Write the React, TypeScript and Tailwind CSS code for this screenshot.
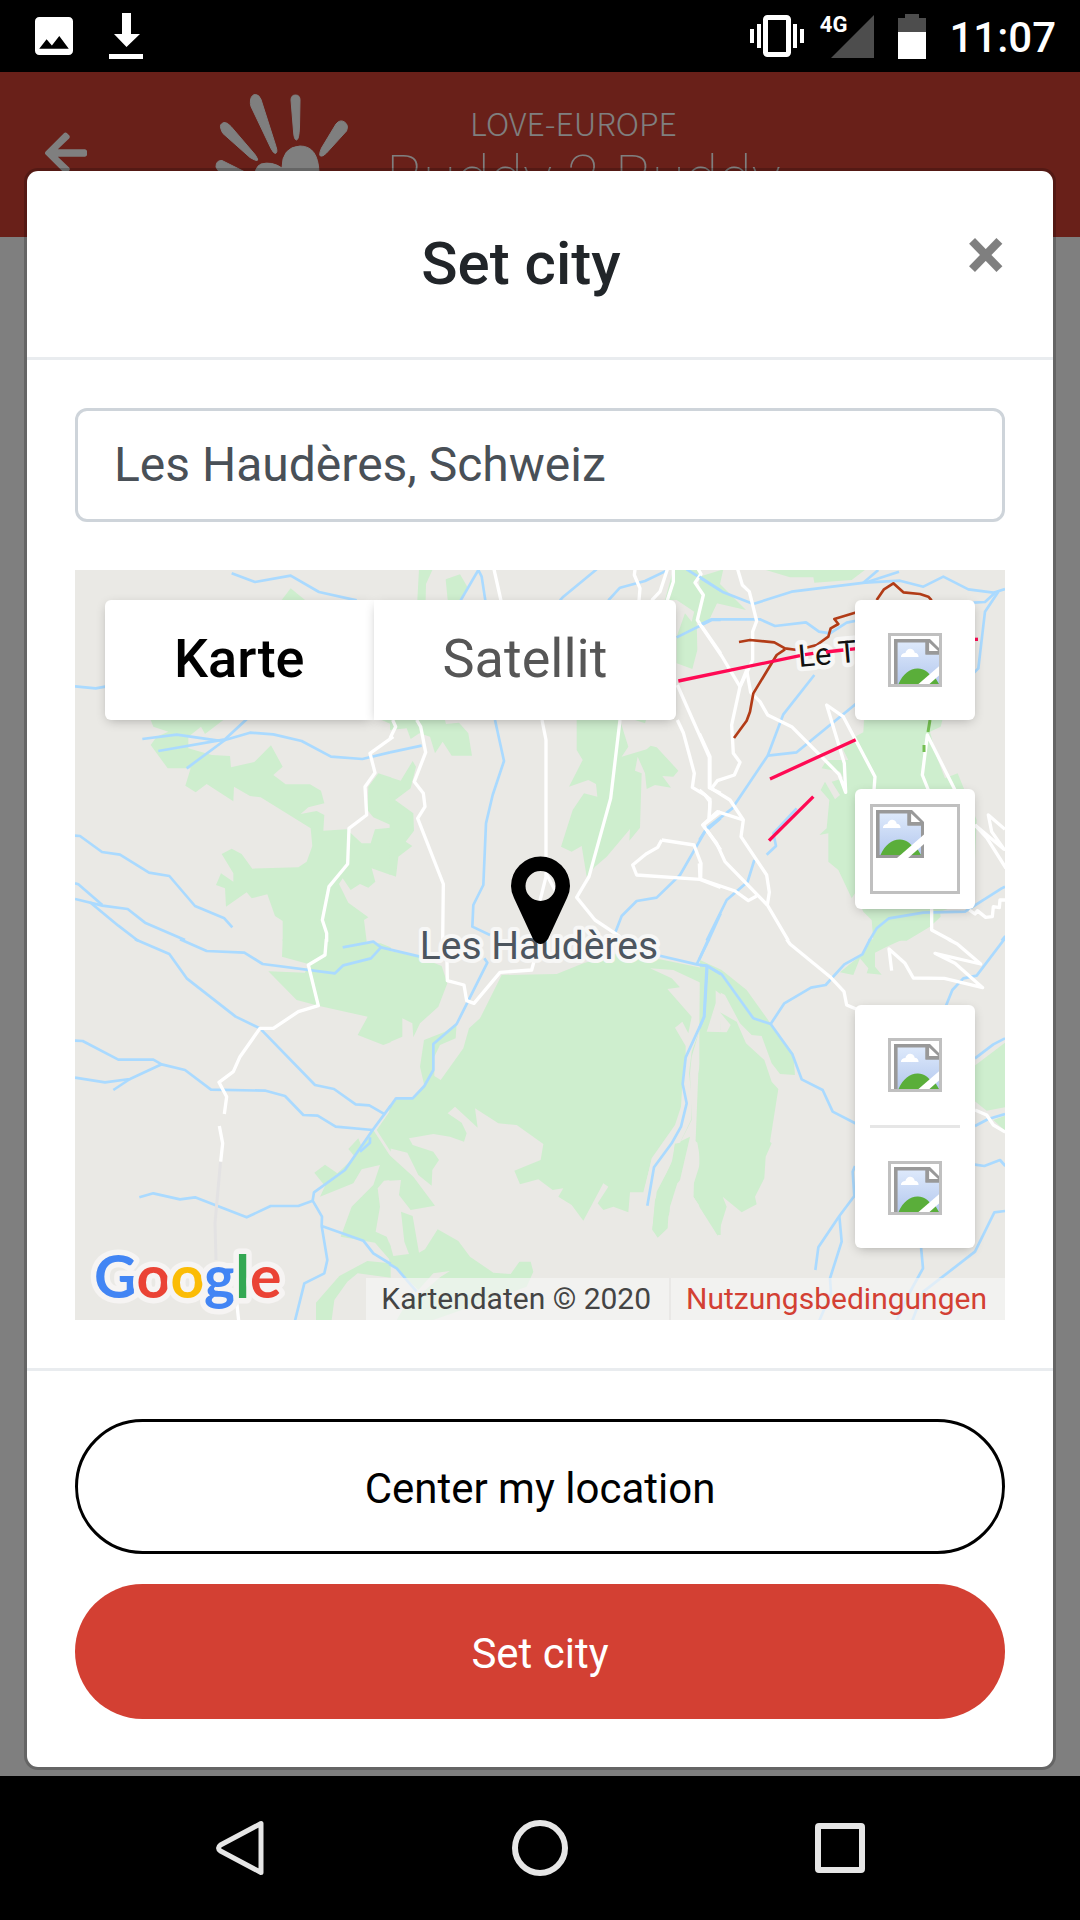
import { FaArrowLeft } from "react-icons/fa";

const WATER = "#aadaff";
const WOOD = "#ceeece";
const ROAD = "#ffffff";
const LIFT = "#ff0a54";
const RAIL = "#b23c17";

type Tile = {
  at: string;
  woods?: string[];
  clearings?: string[];
  rivers?: string[];
  roads?: string[];
  rails?: string[];
  lifts?: string[];
};

/* The map is divided into six tiles, each drawn at three units per pixel. */
const TILES: Tile[] = [
  {
    at: "translate(60 560) scale(0.33333)",
    woods: [
      "665,120 692,85 735,120",
      "272,480 490,480 435,522 423,500 385,530 385,565 455,585 510,588 513,622 583,606 633,556 668,620 640,645 677,673 750,673 783,692 793,730 745,742 722,762 770,753 793,765 790,812 860,808 905,850 932,850 945,808 992,803 992,945 935,925 946,965 925,983 900,972 872,990 848,955 837,972 865,1028 925,1072 912,1080 920,1143 668,1143 668,1083 645,1068 622,1003 575,1015 560,997 498,1040 495,985 468,975 483,940 520,965 520,940 485,882 515,866 545,882 577,926 715,922 740,905 757,858 752,805 602,712 570,708 522,680 520,724 440,672 407,697 376,677 392,625 323,625 272,555 290,530 325,515 280,500",
      "925,680 955,640 992,652 992,795 940,772 922,750",
      "965,480 992,480 992,492",
    ],
    rivers: [
      "515,40 585,66 692,47 777,96 890,121",
      "45,379 107,385 140,379",
      "247,537 350,524 470,541 495,540 570,518 640,523 725,543 813,590 907,597 990,577",
      "295,573 495,538 560,478",
      "495,540 380,625",
      "45,827 60,828 126,876 180,884 267,938 328,948 405,1038 493,1075 517,1102",
      "45,970 55,973 127,1035",
      "45,1017 127,1037 203,1047 255,1088 375,1140",
      "90,1027 175,1097 235,1143",
    ],
    roads: ["1000,530 930,580 945,638 915,680 920,765 867,805 863,912 807,980 787,1080 800,1120 800,1145"],
  },
  {
    at: "translate(60 940) scale(0.33333)",
    woods: [
      "668,-2 666,50 745,72 735,98 625,94 710,180 775,197 923,230 893,285 970,315 992,307 992,22 962,10 922,10 915,-2",
      "992,510 950,570 992,635",
      "940,570 992,650 992,720 972,722 953,745 960,800 947,875 980,890 992,920 992,962 945,908 842,890 875,800 940,735 960,675 905,688 880,730 780,770 795,738 763,698 795,674 832,700 885,650 865,627 895,595 905,620",
      "768,1140 768,1088 838,1008 922,963 992,970 992,1013 893,1000 862,1025 823,1080 815,1140",
    ],
    rivers: [
      "225,-2 328,42 380,115 527,230 600,265 765,435 822,447 887,493 928,496 975,523",
      "360,-2 440,33 553,38 608,72 825,100 850,76 933,55 963,22 940,5 848,22",
      "963,22 992,29",
      "45,302 68,303 175,359 280,359 305,373 375,390 453,449 617,452 675,468 730,525 773,527 827,560 938,570",
      "45,413 135,427 210,417 305,373",
      "210,417 160,450",
      "992,497 938,570 855,690 762,757 758,782 786,830 785,858 802,960 793,1000 733,1030 705,1142",
      "930,592 930,608 900,635",
      "238,772 280,760 360,778 405,772 560,832 632,798 715,798 758,782",
      "785,858 910,902 940,940 992,972",
    ],
    roads: [
      "799,-3 795,45 745,75 775,197 715,215 640,265 600,265 540,350 520,395 477,427 500,470 493,522",
      "478,558 488,610 482,665",
      "530,1085 536,1142",
    ],
  },
  {
    at: "translate(390 560) scale(0.33333)",
    woods: [
      "87,28 128,28 108,72 107,120 82,120",
      "167,58 210,43 232,80 215,120 173,120",
      "850,28 935,28 915,70 940,110 920,180 922,270 907,327 860,310 860,230 885,160 905,185 920,125 940,65 990,60 990,110 955,185 905,150 860,120 825,120",
      "0,480 165,480 168,492 207,488 235,520 246,587 185,587 158,545 135,580 120,530 88,520 62,537 50,505 0,510",
      "0,652 32,662 68,603 78,620 62,685 15,720 70,760 72,812 47,845 67,858 25,890 18,950 -2,943",
      "560,480 690,480 715,560 695,590 770,568 782,557 800,562 865,632 850,650 817,648 843,683 795,675 770,687 765,640 743,590 735,632 755,640 750,803 718,842 720,807 650,890 615,920 590,950 575,858 545,875 513,860 548,750 582,700 622,710 618,672 595,660 537,680 578,600 560,570",
      "735,480 768,480 765,490",
    ],
    rivers: [
      "212,121 265,30 275,50 286,121",
      "510,121 520,110 620,28",
      "655,121 690,83 765,63 830,32",
      "860,232 965,180 992,180",
      "890,28 992,92",
      "0,577 95,557",
      "315,480 342,603 308,705 288,790 280,975 250,1035 247,1100 300,1125",
      "992,775 945,815 870,945 800,1013 740,1023 695,1068 675,1120",
      "992,1060 955,1142",
    ],
    roads: [
      "312,28 333,122",
      "735,28 733,45 750,85 747,121",
      "832,28 810,95 785,121",
      "850,28 850,65 832,121",
      "925,28 933,42 915,68 940,105 922,180 992,280",
      "0,535 17,500 8,480",
      "80,480 92,500 107,577 73,665 100,700 105,740 83,775 160,972 158,1142",
      "456,480 468,540 468,950 448,1030",
      "468,940 500,1000",
      "690,480 662,715 597,950 560,1012 615,1080 690,1130",
      "862,375 958,592 958,683 992,700",
      "862,480 880,518 913,640 907,682 945,705 960,725 957,777",
      "992,755 940,795 992,870",
      "815,840 803,862 768,882 728,915 740,945 930,958 992,982",
      "815,840 912,855 933,910 932,955",
    ],
  },
  {
    at: "translate(390 940) scale(0.33333)",
    woods: [
      "-2,32 90,52 155,78 172,130 145,200 90,250 70,292 67,250 37,235 37,290 -2,307",
      "700,35 992,95 992,270 948,275 977,205 975,145 955,120 950,200 905,350 900,400 905,540 870,608 855,680 800,790 803,890 787,870 795,780 850,655 855,610 875,590 900,480 860,560 785,660 760,757 720,757 715,817 670,800 640,810 623,790 655,740 640,730 580,842 545,795 505,770 520,745 488,750 445,718 390,733 373,692 452,660 460,612 380,555 325,550 255,505 263,563 195,500 173,520 215,548 230,580 222,605 180,590 130,582 57,595 68,615 130,635 147,660 127,690 125,737 85,705 52,638 -2,625 -2,505 20,477 68,475 103,437 90,380 102,300 165,275 200,250 197,295 150,315 133,350 133,408 152,420 220,325 237,265 270,235 335,105 500,102 580,70",
      "-2,645 70,710 135,797 62,810 27,765 33,720 -2,722",
      "33,815 68,828 87,938 105,928 143,868 205,903 240,950 310,998 362,1002 388,965 422,965 430,995 410,1040 300,1080 130,1140 20,1140 55,1080 95,1060 150,1012 180,993 130,1000 85,1050 -2,965 -2,905 10,948 57,942 43,905",
      "900,590 870,720 835,830 833,865 803,893 787,868 800,755 845,670 855,612",
      "992,280 945,290 925,400 910,770 985,885 992,885",
    ],
    clearings: [
      "780,85 850,90 935,130 943,230 887,350 887,318 855,263 877,245 895,280 905,230 832,147 870,142 845,115",
      "940,240 905,335 897,400 905,470 903,540 870,608 850,612 785,705 762,757 785,655 855,555 873,500 877,430 890,350",
      "902,590 922,608 932,665 910,735 910,770 985,885 870,940 835,860 840,800 862,730 880,710",
      "975,150 995,165 992,278 948,275 975,205",
    ],
    rivers: [
      "-2,28 90,50",
      "283,55 292,68 200,252 130,312 130,390 103,438 68,475 18,475 -2,503",
      "800,45 920,73 952,78 992,102",
      "957,-2 920,73",
      "952,78 943,230 887,352 878,432 890,490 873,560 845,610 792,682 772,797",
      "-2,972 20,985 80,1055",
    ],
    roads: ["170,0 172,122 222,135 230,182 252,190 330,97 425,90 433,60"],
  },
  {
    at: "translate(700 560) scale(0.33333)",
    woods: [
      "-2,50 70,28 60,72 138,150 50,130 25,180 -2,200",
      "190,28 497,28 455,60 343,68 340,52 270,52 215,35",
      "492,480 727,480 722,500 690,515 710,590 735,655 773,640 830,780 820,1020 720,1055 722,1070 690,1100 620,1142 520,1142 515,1080 490,1055 465,1000 455,1015 415,930 385,905 385,820 358,825 380,805 388,720 362,690 375,665 405,718 420,705 395,665 430,655 420,635 365,625 380,600 445,600 430,570 465,530 490,517",
    ],
    rivers: [
      "-2,50 70,97 160,132 275,95 495,68 600,62 670,80 730,50 805,88 880,98 915,87",
      "490,68 535,30",
      "495,68 597,35",
      "820,128 855,126 885,98",
      "895,95 855,155 835,325 820,340",
      "-2,195 35,178 180,178 225,198 318,187 357,215 390,220 440,188 480,180",
      "343,345 250,463 203,587 97,745 20,805 -2,840",
      "203,587 290,577 470,430",
      "290,745 220,820 228,858 200,884",
      "163,900 143,965 80,1020 20,1142",
      "508,1142 530,1105 567,1075 670,1058 795,1055 905,985 915,980",
      "905,1142 916,1128",
    ],
    roads: [
      "113,28 127,75 148,95 170,183 158,215 158,300 120,380 95,495 100,580 120,607 103,645 52,662 35,685",
      "-2,190 65,288 120,380",
      "120,380 140,330 152,397 180,425 203,465 275,500 417,643 437,697 433,610 380,435 430,470 525,650 522,690",
      "-2,520 30,590 30,683 90,720 130,780 123,830 200,945 208,997 202,1035 265,1142",
      "-2,690 30,718 28,775",
      "130,780 52,755 8,795 50,850 75,905 202,1035",
      "-2,910 0,957 105,993 145,1022 170,1008",
      "685,690 667,645 682,525 765,690",
      "825,795 912,868 875,815 865,765 915,808",
      "825,795 860,833 918,925",
      "695,1040 695,1110 755,1142",
      "808,1050 825,1062 832,1052 857,1072 877,1070 880,1040 898,1043 900,1020 916,1020",
    ],
    rails: [
      "117,246 150,240 223,247 255,265 292,270 350,255 385,230 392,205 415,192 403,177 470,157",
      "255,268 230,285 160,400 150,455 140,482 102,534",
      "530,120 552,88 580,70 610,97 660,102 685,110 695,121",
    ],
    lifts: ["-65,363 300,287", "315,284 340,280", "378,276 430,270", "450,268 470,266", "210,657 467,539", "207,842 340,710", "820,238 834,238"],
  },
  {
    at: "translate(700 940) scale(0.33333)",
    woods: [
      "0,60 65,90 140,150 215,255 280,340 285,405 240,402 215,370 185,288 155,285 120,250 75,165 47,150 47,190 20,275 80,277 92,255 60,217 110,245 138,310 193,360 215,425 235,447 210,605 215,610 197,650 193,715 165,770 170,793 125,817 68,770 80,800 53,887 -2,800 -2,260",
      "512,-2 610,-2 560,20 525,38 525,80 545,104 500,100 505,85 480,55 460,105 420,97 450,72 485,45",
      "820,380 915,308 915,502 860,512 820,480",
      "880,540 915,527 915,572",
    ],
    rivers: [
      "25,-2 -2,58",
      "-2,75 20,77 65,103 160,235 212,252 277,343 305,418 368,450 398,515 470,552",
      "20,80 12,230 -2,265",
      "510,-2 487,43 433,73 377,135 333,143 253,190 212,252",
      "915,-5 830,107 790,115 757,150 738,197",
      "825,355 880,313 915,295",
      "825,558 865,537 915,522",
      "820,673 853,678 900,660 916,678",
      "465,678 458,695 463,768 418,828 355,922 346,990",
      "418,828 425,905 390,1015 393,1060 358,1142",
      "663,920 669,985 625,1065 590,1142",
      "915,813 883,817 825,935 670,1055 637,1142",
    ],
    roads: [
      "260,-2 270,12 390,110 432,155 440,195 470,208",
      "575,92 567,27 615,70 640,114 733,115 848,143 765,70 705,40 842,72 772,12 745,-2",
      "825,510 860,525 880,555 916,576",
    ],
  },
];

function Terrain() {
  return (
    <svg
      className="h-full w-full"
      viewBox="75 570 930 750"
      preserveAspectRatio="xMidYMid slice"
      aria-hidden="true"
    >
      <rect x="75" y="570" width="930" height="750" fill="#eae9e5" />
      {TILES.map((t) => (
        <g key={t.at} transform={t.at}>
          {t.woods?.map((p) => <polygon key={p} points={p} fill={WOOD} />)}
          {t.clearings?.map((p) => <polygon key={p} points={p} fill="#eae9e5" />)}
        </g>
      ))}
      {TILES.map((t) => (
        <g key={t.at} transform={t.at} fill="none" strokeLinejoin="round">
          {t.rivers?.map((p) => <polyline key={p} points={p} stroke={WATER} strokeWidth="8" />)}
          {t.roads?.map((p) => <polyline key={p} points={p} stroke={ROAD} strokeWidth="10" />)}
          {t.rails?.map((p) => <polyline key={p} points={p} stroke={RAIL} strokeWidth="8" />)}
        </g>
      ))}
      <path d="M220.500 1162L215 1223L216 1260" fill="none" stroke="#e3e2e3" strokeWidth="3" />
      <path d="M930 720l-2 12M924 745v7" fill="none" stroke="#74bf52" strokeWidth="3" />
      <g
        fontFamily="Roboto, sans-serif"
        stroke="#f7f7f6"
        strokeLinejoin="round"
        paintOrder="stroke"
      >
        <text x="799" y="667" fontSize="31" fill="#111111" strokeWidth="9" transform="rotate(-5 799 667)">
          Le T
        </text>
        <text x="539" y="959" fontSize="39" textAnchor="middle" fill="#4d565f" strokeWidth="8">
          Les Haudères
        </text>
      </g>
      <g transform="translate(700 560) scale(0.33333)">
        {TILES[4].lifts?.map((p) => (
          <polyline key={p} points={p} fill="none" stroke={LIFT} strokeWidth="10" />
        ))}
      </g>
      <path
        fillRule="evenodd"
        d="M511 886a29.500 29.500 0 0 1 59 0q0 6-3 12l-19 41q-7.500 10-15 0l-19-41q-3-6-3-12zM525.500 886a15 15 0 1 0 30 0a15 15 0 1 0-30 0z"
      />
    </svg>
  );
}

function BrokenImage() {
  return (
    <svg className="h-12 w-12 max-w-none shrink-0" viewBox="0 0 16 16" aria-hidden="true">
      <defs>
        <linearGradient id="sky" x1="0" y1="0" x2="0" y2="1">
          <stop offset="0" stopColor="#dde9fb" />
          <stop offset="1" stopColor="#b4c8ee" />
        </linearGradient>
      </defs>
      <path d="M0 0H11.500L16 4.500V16H0z" fill="#999999" />
      <path d="M1.200 1.200H10.500V5.200H15V15H1.200z" fill="url(#sky)" />
      <path d="M2.300 6c0-.9.700-1.300 1.500-1.300C4 3.500 5 3 5.800 3.300c.7.200 1 .7 1.100 1.300.8 0 1.300.6 1.300 1.400z" fill="#ffffff" />
      <path d="M1.500 15C3 11.500 5.500 9.700 8 9.800c2 0 3.600 1.400 4.500 2.700l1.300.5L15 15z" fill="#5aae3a" />
      <path d="M16 8.200V11.300L10.700 16H7z" fill="#ffffff" />
      <path d="M10.500 0H12L16 4V5.200H10.500z" fill="#999999" />
      <path d="M11.700 1.200V4H14.700z" fill="#ffffff" />
    </svg>
  );
}

function SmallPlaceholder() {
  return (
    <span className="flex h-[54px] w-[54px] overflow-hidden border-3 border-[#c0c0c0] pt-[3px] pl-[3px]">
      <BrokenImage />
    </span>
  );
}

function StatusBar() {
  return (
    <div className="flex h-18 items-center justify-between bg-black pr-6 pl-[35px] text-white">
      <div className="flex items-center gap-9">
        <svg className="h-[38px] w-[38px]" viewBox="3 3 18 18" fill="currentColor" aria-hidden="true">
          <path d="M21 19V5c0-1.100-.9-2-2-2H5c-1.100 0-2 .9-2 2v14c0 1.100.9 2 2 2h14c1.100 0 2-.9 2-2zM8.500 13.500l2.500 3 3.500-4.500 4.500 6H5l3.500-4.500z" />
        </svg>
        <svg className="h-[46px] w-[34px]" viewBox="0 0 34 46" fill="currentColor" aria-hidden="true">
          <path d="M13 0h9v21h9L17.500 34 5 21h8zM0 41h34v5H0z" />
        </svg>
      </div>
      <div className="flex items-center">
        <svg className="h-[42px] w-[54px]" viewBox="0 0 54 42" fill="currentColor" aria-hidden="true">
          <path d="M0 14h4v14H0zM7 9h4v24H7zM43 9h4v24h-4zM50 14h4v14h-4z" />
          <rect x="15.500" y="2.500" width="23" height="37" rx="2" fill="none" stroke="currentColor" strokeWidth="5" />
        </svg>
        <span className="ml-4 self-start text-[22px] leading-6 font-bold">4G</span>
        <svg className="-ml-4 h-[43px] w-[43px]" viewBox="0 0 43 43" aria-hidden="true">
          <path d="M43 0V43H0z" fill="#4d4d4d" />
        </svg>
        <svg className="ml-6 h-[45px] w-7" viewBox="0 0 28 45" aria-hidden="true">
          <path d="M7 0h14v4h7v15H0V4h7z" fill="#4d4d4d" />
          <path d="M0 18h28v27H0z" fill="#ffffff" />
        </svg>
        <span className="ml-[23px] pt-1 text-[42px] leading-none font-medium">11:07</span>
      </div>
    </div>
  );
}

function AppHeader() {
  return (
    <header className="flex h-[165px] bg-[#d34033] pl-[42px] text-white">
      <button type="button" aria-label="Back" className="flex items-center pb-1">
        <FaArrowLeft size={48} />
      </button>
      <svg
        className="mt-5 ml-[125px] h-[120px] w-[135px]"
        viewBox="215 92 135 120"
        fill="currentColor"
        stroke="currentColor"
        aria-hidden="true"
      >
        <path d="M250.500 100q1-5.500 5-5.500 3.500 0 5.500 5l15 47q2 6-.5 7-2 0-4.500-5l-20-42q-1-3-.5-6.500z" />
        <path d="M291 100q0-5 4.500-5t4.500 5l-.5 27q-.5 13-3 13t-3-9z" />
        <path d="M336 124q4-5 8.500-2t2 9l-20 22q-4 4-6 3t1-8z" />
        <path d="M221 129q-2-5 3-6.500 3-.5 7 4l24 28q4 6 2 6t-7-3l-27-24q-1.500-2-2-4.500z" />
        <path d="M216 167q0-7 6-6.500l32 16-8 8-28-14z" />
        <path d="M255 180q-1-13 6-16 11-3 21 4 0-21 18-22 18 0 19 26-1 26-30 38-30-6-34-30z" />
      </svg>
      <div className="ml-9 flex flex-col items-start pt-[38px] whitespace-nowrap">
        <span className="pl-[84px] font-['Noto_Sans_CJK_SC',sans-serif] text-[32px] leading-6 font-light">
          LOVE-EUROPE
        </span>
        <span className="pt-1 text-[61px] leading-20 font-thin">Buddy 2 Buddy</span>
      </div>
    </header>
  );
}

function CityMap() {
  return (
    <div className="relative mt-12 h-[750px] overflow-hidden">
      <Terrain />
      <div className="absolute top-[30px] left-[30px] flex h-30 text-[54px]">
        <button type="button" className="rounded-l-md bg-white px-[69px] pb-1 font-medium text-black shadow-[0_3px_12px_-3px_rgba(0,0,0,0.3)]">
          Karte
        </button>
        <button type="button" className="rounded-r-md bg-white px-[69px] pb-1 text-[#565656] shadow-[0_3px_12px_-3px_rgba(0,0,0,0.3)]">
          Satellit
        </button>
      </div>
      <div className="absolute top-[30px] right-[30px] flex flex-col">
        <button type="button" aria-label="Fullscreen" className="flex h-30 w-30 items-center justify-center rounded-md bg-white shadow-[0_3px_12px_-3px_rgba(0,0,0,0.3)]">
          <SmallPlaceholder />
        </button>
        <button type="button" aria-label="Street view" className="mt-[69px] flex h-30 w-30 items-center justify-center rounded-md bg-white shadow-[0_3px_12px_-3px_rgba(0,0,0,0.3)]">
          <span className="flex h-[90px] w-[90px] border-3 border-[#c0c0c0] pt-[3px] pl-[3px]">
            <BrokenImage />
          </span>
        </button>
        <div className="mt-24 flex flex-col items-center rounded-md bg-white shadow-[0_3px_12px_-3px_rgba(0,0,0,0.3)]">
          <button type="button" aria-label="Zoom in" className="flex h-30 w-30 items-center justify-center">
            <SmallPlaceholder />
          </button>
          <hr className="w-[90px] border-t-3 border-[#e6e6e6]" />
          <button type="button" aria-label="Zoom out" className="flex h-30 w-30 items-center justify-center">
            <SmallPlaceholder />
          </button>
        </div>
      </div>
      <svg className="absolute bottom-0 left-3 h-[84px] w-[204px]" viewBox="0 0 204 84" role="img" aria-label="Google">
        <text
          x="7"
          y="62"
          fontFamily="Lato, sans-serif"
          fontWeight="700"
          fontSize="59"
          stroke="#f6f4f3"
          strokeWidth="11"
          strokeLinejoin="round"
          paintOrder="stroke"
        >
          <tspan fill="#4285f4">G</tspan>
          <tspan fill="#ea4335">o</tspan>
          <tspan fill="#fbbc05">o</tspan>
          <tspan fill="#4285f4">g</tspan>
          <tspan fill="#34a853">l</tspan>
          <tspan fill="#ea4335">e</tspan>
        </text>
      </svg>
      <div className="absolute right-0 bottom-0 flex h-[42px] items-center text-[30px] leading-[42px]">
        <span className="bg-[#f5f5f5]/70 pr-[18px] pl-[15px] text-[#444444]">Kartendaten © 2020</span>
        <a href="#terms" className="border-l-2 border-[#e9e8e6] bg-[#f5f5f5]/70 pr-[18px] pl-[15px] text-[#d34033]">
          Nutzungsbedingungen
        </a>
      </div>
    </div>
  );
}

function CityDialog() {
  return (
    <div
      role="dialog"
      aria-labelledby="dialog-title"
      className="mx-6 mt-24 mb-1.5 rounded-[14px] border-3 border-black/20 bg-white bg-clip-padding"
    >
      <div className="flex items-start border-b-3 border-[#e9ecef] p-12">
        <h1 id="dialog-title" className="flex-1 text-center text-[60px] leading-[90px] font-medium text-[#212529]">
          Set city
        </h1>
        <button type="button" aria-label="Close" className="text-[72px] leading-[72px] font-bold text-black/50">
          ×
        </button>
      </div>
      <div className="p-12">
        <input
          type="text"
          aria-label="City"
          defaultValue="Les Haudères, Schweiz"
          className="block h-[114px] w-full rounded-xl border-3 border-[#ced4da] bg-white px-9 pb-0.5 text-5xl text-[#495057]"
        />
        <CityMap />
      </div>
      <div className="flex flex-col gap-[30px] border-t-3 border-[#e9ecef] p-12">
        <button type="button" className="h-[135px] rounded-full border-3 border-black bg-white pt-1 text-[42px] text-black">
          Center my location
        </button>
        <button type="button" className="h-[135px] rounded-full bg-[#d34033] pt-1 text-[42px] text-white">
          Set city
        </button>
      </div>
    </div>
  );
}

function NavBar() {
  return (
    <nav className="grid h-36 grid-cols-3 items-center justify-items-center bg-black px-[90px] text-[#e6e6e6]">
      <button type="button" aria-label="Back">
        <svg className="h-14 w-12" viewBox="0 0 48 56" fill="none" stroke="currentColor" strokeWidth="5" strokeLinejoin="round" aria-hidden="true">
          <path d="M45 3.500V52.500L4.500 31q-4-3 0-6z" />
        </svg>
      </button>
      <button type="button" aria-label="Home">
        <svg className="h-14 w-14" viewBox="0 0 56 56" fill="none" stroke="currentColor" strokeWidth="6" aria-hidden="true">
          <circle cx="28" cy="28" r="25" />
        </svg>
      </button>
      <button type="button" aria-label="Recent apps">
        <svg className="h-[50px] w-[50px]" viewBox="0 0 50 50" fill="none" stroke="currentColor" strokeWidth="6" aria-hidden="true">
          <rect x="3" y="3" width="44" height="44" rx="1" />
        </svg>
      </button>
    </nav>
  );
}

export default function App() {
  return (
    <div className="flex min-h-screen flex-col bg-black font-['Roboto',sans-serif]">
      <StatusBar />
      <main className="grid flex-1 grid-cols-1">
        <div className="col-start-1 row-start-1 overflow-hidden bg-white">
          <AppHeader />
        </div>
        <div className="z-10 col-start-1 row-start-1 bg-black/50">
          <CityDialog />
        </div>
      </main>
      <NavBar />
    </div>
  );
}
